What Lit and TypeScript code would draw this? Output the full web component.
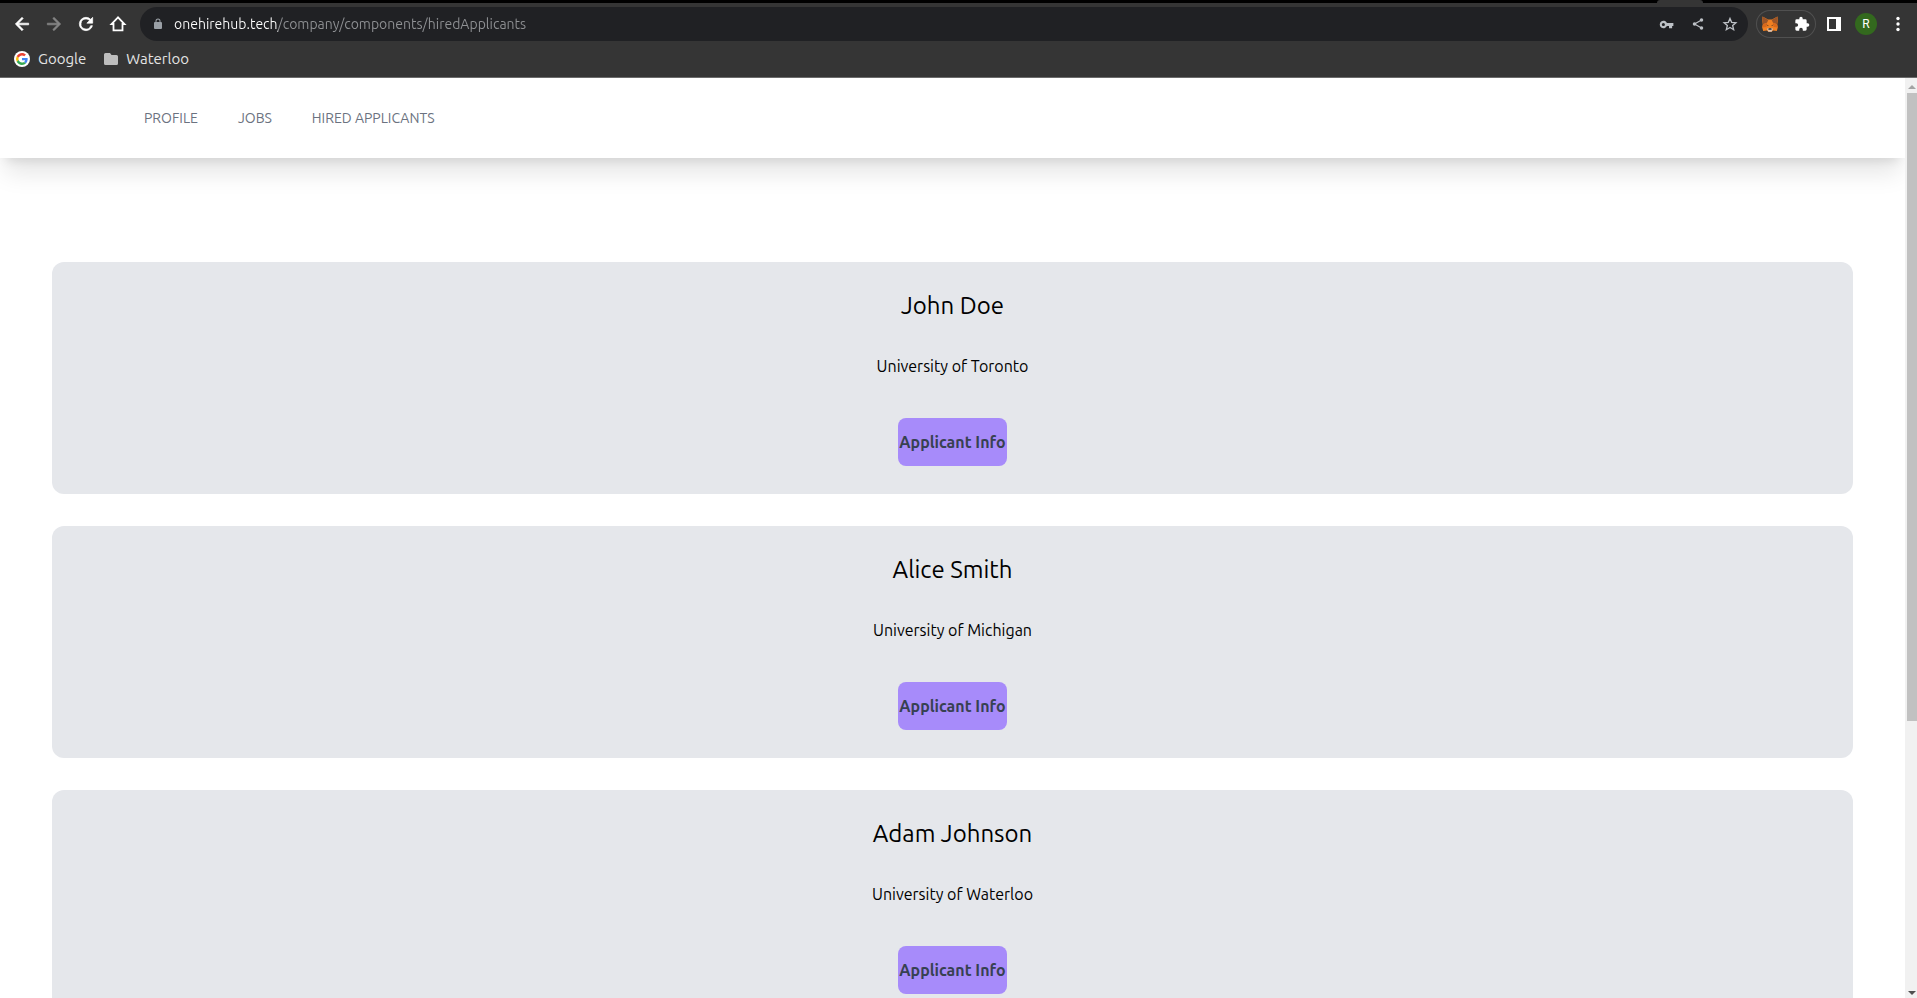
import { LitElement, html, css, svg } from "lit";
import { customElement, property } from "lit/decorators.js";

const sans = css`Ubuntu, "Noto Sans", "Open Sans", sans-serif`;

interface Applicant {
  name: string;
  school: string;
}

const applicants: Applicant[] = [
  { name: "John Doe", school: "University of Toronto" },
  { name: "Alice Smith", school: "University of Michigan" },
  { name: "Adam Johnson", school: "University of Waterloo" },
];

const icon = (body: unknown, size = 18, box = 24) => html`
  <svg width=${size} height=${size} viewBox="0 0 ${box} ${box}" fill="currentColor" aria-hidden="true">${body}</svg>
`;

const icons = {
  back: svg`<path d="M20 11H7.8l5.6-5.6L12 4l-8 8 8 8 1.4-1.4L7.8 13H20z" stroke="currentColor" stroke-width=".8"/>`,
  forward: svg`<path d="M4 11h12.2l-5.6-5.6L12 4l8 8-8 8-1.4-1.4 5.6-5.6H4z" stroke="currentColor" stroke-width=".8"/>`,
  reload: svg`<path d="M17.65 6.35A7.96 7.96 0 0 0 12 4a8 8 0 1 0 7.73 10h-2.08A6 6 0 1 1 12 6c1.66 0 3.14.69 4.22 1.78L13 11h7V4z" stroke="currentColor" stroke-width=".8"/>`,
  home: svg`<path d="M12 3.2 3.4 12H6v8.5h12V12h2.6z" fill="none" stroke="currentColor" stroke-width="2.4"/>`,
  lock: svg`<path d="M18 8h-1V6A5 5 0 0 0 7 6v2H6a2 2 0 0 0-2 2v10a2 2 0 0 0 2 2h12a2 2 0 0 0 2-2V10a2 2 0 0 0-2-2zM9 6a3 3 0 0 1 6 0v2H9z"/>`,
  key: svg`<path fill-rule="evenodd" d="M12.65 9.5A6 6 0 1 0 12.65 14.5H16v3.5h5v-3.5h2v-5zM7 14.5a2.5 2.5 0 1 1 0-5 2.5 2.5 0 0 1 0 5z"/>`,
  share: svg`<path d="M18 5 6 12l12 7" fill="none" stroke="currentColor" stroke-width="2"/><circle cx="18" cy="5" r="3"/><circle cx="6" cy="12" r="3"/><circle cx="18" cy="19" r="3"/>`,
  star: svg`<path d="m12 3.6 2.5 5.9 6.4.6-4.9 4.2 1.5 6.3-5.5-3.3-5.5 3.3L8 14.3l-4.9-4.2 6.400-.6z" fill="none" stroke="currentColor" stroke-width="2"/>`,
  puzzle: svg`<path d="M20.5 11H19V7a2 2 0 0 0-2-2h-4V3.5a2.5 2.5 0 0 0-5 0V5H4a2 2 0 0 0-2 2v3.8h1.5a2.7 2.7 0 0 1 0 5.4H2V20a2 2 0 0 0 2 2h3.8v-1.5a2.7 2.7 0 0 1 5.4 0V22H17a2 2 0 0 0 2-2v-4h1.5a2.5 2.5 0 0 0 0-5z"/>`,
  panel: svg`<path fill-rule="evenodd" d="M0 0h14v14H0zM2 2v10h7V2z"/>`,
  dots: svg`<circle cx="8" cy="2.5" r="1.7"/><circle cx="8" cy="8" r="1.7"/><circle cx="8" cy="13.5" r="1.7"/>`,
  folder: svg`<path d="M1.5 1h4.5l1.5 2h5A1.5 1.5 0 0 1 14 4.5v7a1.5 1.5 0 0 1-1.5 1.5h-11A1.5 1.5 0 0 1 0 11.5v-9A1.5 1.5 0 0 1 1.5 1z"/>`,
  google: svg`
    <circle cx="24" cy="24" r="24" fill="#fff"/>
    <g transform="translate(6.2 6.2) scale(.74)">
      <path fill="#ea4335" d="M24 9.5c3.54 0 6.71 1.22 9.21 3.6l6.85-6.85C35.9 2.38 30.47 0 24 0 14.62 0 6.51 5.38 2.56 13.22l7.98 6.19C12.43 13.72 17.74 9.5 24 9.5z"/>
      <path fill="#4285f4" d="M46.98 24.55c0-1.57-.15-3.09-.38-4.55H24v9.02h12.94c-.58 2.96-2.26 5.48-4.78 7.18l7.73 6c4.51-4.18 7.09-10.36 7.09-17.65z"/>
      <path fill="#fbbc05" d="M10.53 28.59a14.5 14.5 0 0 1 0-9.18l-7.98-6.19a24 24 0 0 0 0 21.56z"/>
      <path fill="#34a853" d="M24 48c6.48 0 11.93-2.13 15.89-5.81l-7.73-6c-2.15 1.45-4.92 2.3-8.16 2.3-6.26 0-11.57-4.22-13.47-9.91l-7.98 6.19C6.51 42.62 14.62 48 24 48z"/>
    </g>`,
  fox: svg`
    <path fill="#f08022" d="M.5.5 6 3.5h4L15.5.5l.3 4-.6 4 .6 3-1 3.5-3.6-.6-1.6 1.3H6.4l-1.6-1.3-3.6.6-1-3.5.6-3-.6-4z"/>
    <path fill="#9a5428" d="M.5.5 6.3 4 5 6.8.9 8.3.3 4.5zM15.5.5 9.7 4 11 6.8l4.1 1.5.6-3.8z"/>
    <path fill="#d9691c" d="M.9 8.3 5 6.8 4.5 11 .2 11.5zM15.1 8.3 11 6.8l.5 4.2 4.3.5z"/>
    <path fill="#5a3a24" d="m4.3 8.6 2.2.6-.4 1zM11.7 8.6l-2.2.6.4 1z"/>
    <path fill="#d7c1b3" d="m5 12.8 1.2-.6h3.6l1.2.6-1.3 2.9H6.3z"/>
    <path fill="#2b2b2b" d="M6.7 12.3h2.6l.4 1.5H6.3z"/>`,
};

@customElement("browser-chrome")
class BrowserChrome extends LitElement {
  static styles = css`
    :host {
      display: block;
      background: #353535;
      border-bottom: 1px solid #6b6b6b;
      font-family: ${sans};
      color: #fff;
    }
    .tabstrip {
      display: flex;
      justify-content: flex-end;
      height: 3px;
      padding-right: 214px;
      background: #000;
    }
    .active-tab {
      width: 46px;
      background: #353535;
      border-radius: 3px 3px 0 0;
    }
    .toolbar {
      display: flex;
      align-items: center;
      padding: 4px 3px 0 6px;
    }
    button {
      display: grid;
      place-items: center;
      width: 32px;
      height: 28px;
      padding: 0;
      border: 0;
      background: none;
      color: inherit;
      font: inherit;
    }
    button:disabled {
      color: #868686;
    }
    .address {
      display: flex;
      align-items: center;
      flex: 1;
      height: 34px;
      margin: 0 8px 0 6px;
      padding: 0 2px 0 12px;
      border-radius: 17px;
      background: #202124;
      color: #bdc1c6;
    }
    .lock {
      display: grid;
      color: #9aa0a6;
    }
    .url {
      flex: 1;
      min-width: 0;
      height: 24px;
      margin-left: 10px;
      padding: 0;
      border: 0;
      outline: 0;
      font-family: inherit;
      font-size: 14px;
      background: linear-gradient(90deg, #fff 104px, #8f9194 104px);
      background-clip: text;
      -webkit-background-clip: text;
      -webkit-text-fill-color: transparent;
    }
    .extensions {
      display: flex;
      gap: 4px;
      margin-right: 2px;
      border-radius: 14px;
      box-shadow: inset 0 0 0 1px #505050;
    }
    .extensions button {
      width: 28px;
    }
    .avatar {
      display: grid;
      place-items: center;
      width: 22px;
      height: 22px;
      border-radius: 50%;
      background: #33691e;
      font-family: Roboto, sans-serif;
      font-size: 12px;
    }
    .bookmarks {
      display: flex;
      gap: 18px;
      padding: 6px 14px;
    }
    .bookmarks a {
      display: flex;
      align-items: center;
      gap: 8px;
      color: #e4e4e4;
      font-size: 15px;
      line-height: 24px;
      text-decoration: none;
    }
    .folder {
      display: grid;
      color: #bdbdbd;
    }
  `;

  render() {
    return html`
      <div class="tabstrip"><div class="active-tab"></div></div>
      <div class="toolbar">
        <button aria-label="Back">${icon(icons.back, 20)}</button>
        <button aria-label="Forward" disabled>${icon(icons.forward, 20)}</button>
        <button aria-label="Reload">${icon(icons.reload, 20)}</button>
        <button aria-label="Home">${icon(icons.home, 18)}</button>
        <div class="address">
          <span class="lock">${icon(icons.lock, 12)}</span>
          <input class="url" aria-label="Address" value="onehirehub.tech/company/components/hiredApplicants" />
          <button aria-label="Passwords">${icon(icons.key, 15)}</button>
          <button aria-label="Share">${icon(icons.share, 14)}</button>
          <button aria-label="Bookmark">${icon(icons.star, 16)}</button>
        </div>
        <div class="extensions">
          <button aria-label="Wallet">${icon(icons.fox, 16, 16)}</button>
          <button aria-label="Extensions">${icon(icons.puzzle, 16)}</button>
        </div>
        <button aria-label="Side panel">${icon(icons.panel, 14, 14)}</button>
        <button aria-label="Account"><span class="avatar">R</span></button>
        <button aria-label="Menu">${icon(icons.dots, 16, 16)}</button>
      </div>
      <nav class="bookmarks" aria-label="Bookmarks">
        <a href="#google">${icon(icons.google, 16, 48)}Google</a>
        <a href="#waterloo"><span class="folder">${icon(icons.folder, 14, 14)}</span>Waterloo</a>
      </nav>
    `;
  }
}

@customElement("site-nav")
class SiteNav extends LitElement {
  static styles = css`
    :host {
      display: block;
      font-family: ${sans};
      box-shadow: 0 20px 25px -5px rgba(0, 0, 0, 0.1), 0 8px 10px -6px rgba(0, 0, 0, 0.1);
    }
    nav {
      display: flex;
      gap: 40px;
      padding: 30px 144px;
    }
    a {
      color: #6b7280;
      font-size: 14px;
      line-height: 20px;
      text-decoration: none;
      text-transform: uppercase;
    }
  `;

  render() {
    return html`
      <nav aria-label="Main">
        <a href="#profile">Profile</a>
        <a href="#jobs">Jobs</a>
        <a href="#hired">Hired Applicants</a>
      </nav>
    `;
  }
}

@customElement("applicant-card")
class ApplicantCard extends LitElement {
  @property({ attribute: false }) applicant!: Applicant;

  static styles = css`
    :host {
      display: flex;
      flex-direction: column;
      align-items: center;
      padding: 28px;
      border-radius: 12px;
      background: #e5e7eb;
      color: #000;
      font-family: ${sans};
    }
    h2 {
      margin: 0 0 32px;
      font-size: 24px;
      font-weight: 400;
      line-height: 32px;
    }
    p {
      margin: 0 0 40px;
      font-size: 16px;
      line-height: 24px;
    }
    button {
      padding: 12px 1px;
      border: 0;
      border-radius: 8px;
      background: #a78bfa;
      color: #374151;
      font-family: inherit;
      font-size: 16px;
      font-weight: 700;
      line-height: 24px;
    }
  `;

  render() {
    return html`
      <h2>${this.applicant.name}</h2>
      <p>${this.applicant.school}</p>
      <button>Applicant Info</button>
    `;
  }
}

@customElement("scroll-rail")
class ScrollRail extends LitElement {
  static styles = css`
    :host {
      display: flex;
      flex-direction: column;
      width: 10px;
      padding-left: 2px;
      background: #f1f1f1;
    }
    .arrow {
      display: grid;
      place-items: center;
      box-sizing: border-box;
      height: 15px;
      padding-top: 2px;
    }
    .track {
      flex: 1;
    }
    .thumb {
      height: 70.6%;
      background: #c1c1c1;
    }
    .down {
      padding-top: 4px;
    }
  `;

  render() {
    return html`
      <div class="arrow"><svg width="8" height="4" viewBox="0 0 8 4"><path fill="#a3a3a3" d="M4 0 8 4H0z" /></svg></div>
      <div class="track"><div class="thumb"></div></div>
      <div class="arrow down"><svg width="8" height="4" viewBox="0 0 8 4"><path fill="#505050" d="M0 0h8L4 4z" /></svg></div>
    `;
  }
}

@customElement("app-root")
class AppRoot extends LitElement {
  static styles = css`
    :host {
      display: grid;
      grid-template-rows: auto minmax(0, 1fr);
      height: 100vh;
      background: #fff;
    }
    .viewport {
      display: grid;
      grid-template-columns: minmax(0, 1fr) auto;
      min-height: 0;
    }
    .page {
      overflow: hidden auto;
      scrollbar-width: none;
    }
    .list {
      display: grid;
      gap: 32px;
      padding: 104px 52px 32px;
    }
  `;

  render() {
    return html`
      <browser-chrome></browser-chrome>
      <div class="viewport">
        <div class="page">
          <site-nav></site-nav>
          <main class="list">
            ${applicants.map((a) => html`<applicant-card .applicant=${a}></applicant-card>`)}
          </main>
        </div>
        <scroll-rail></scroll-rail>
      </div>
    `;
  }
}
